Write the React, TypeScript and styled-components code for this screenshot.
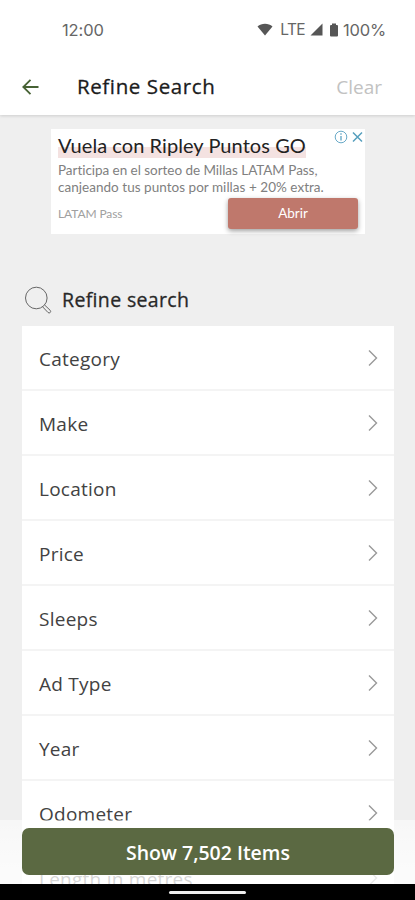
import React from "react";
import styled, { createGlobalStyle } from "styled-components";

const GlobalStyle = createGlobalStyle`
  * { box-sizing: border-box; }
  html, body { margin: 0; padding: 0; overflow: hidden; }
  body { font-family: "Open Sans", sans-serif; background: #efefef; }
`;

const Screen = styled.div`
  position: relative;
  width: 415px;
  height: 900px;
  overflow: hidden;
  background: #efefef;
`;

const Header = styled.header`
  height: 115px;
  background: #fff;
  box-shadow: 0 1px 3px rgba(0, 0, 0, 0.14);
`;

const StatusBar = styled.div`
  height: 58px;
  padding: 1px 29px 0 62px;
  display: flex;
  align-items: center;
  justify-content: space-between;
  color: #666;
  font-family: Inter, sans-serif;
  font-size: 16.5px;
  line-height: 20px;
`;

const Clock = styled.span`
  letter-spacing: -0.1px;
`;

const StatusIcons = styled.div`
  display: flex;
  align-items: center;
  svg { display: block; }
`;

const Network = styled.span`
  margin: 0 5px 0 7px;
  font-size: 15.5px;
  letter-spacing: -0.6px;
`;

const BatteryIcon = styled.svg`
  margin-left: 6px;
`;

const Percent = styled.span`
  margin-left: 4px;
  letter-spacing: -0.2px;
`;

const TitleBar = styled.div`
  height: 57px;
  padding: 0 33px 0 22px;
  display: flex;
  align-items: center;
`;

const Title = styled.h1`
  margin: -2px auto 0 38px;
  font-size: 20.5px;
  line-height: 28px;
  font-weight: 500;
  letter-spacing: 0.6px;
  -webkit-text-stroke: 0.3px #1c1c1c;
  color: #1c1c1c;
`;

const Clear = styled.span`
  font-size: 19px;
  line-height: 28px;
  color: #c2c2c2;
`;

const Ad = styled.section`
  position: relative;
  width: 314px;
  height: 105px;
  margin: 14px 0 0 51px;
  padding: 4px 7px 0;
  background: #fff;
  color: #808080;
  font-family: Lato, sans-serif;
`;

const AdTitle = styled.div`
  width: max-content;
  height: 25px;
  line-height: 25px;
  font-size: 20px;
  letter-spacing: 0.06px;
  color: #222;
  background: linear-gradient(transparent 14px, #f4e2e1 14px);
`;

const AdCopy = styled.div`
  margin-top: 4px;
  font-size: 13.5px;
  line-height: 17px;
  white-space: nowrap;
`;

const AdLine = styled.div<{ $spacing: number }>`
  letter-spacing: ${(p) => p.$spacing}px;
`;

const AdFooter = styled.div`
  display: flex;
  align-items: center;
  justify-content: space-between;
  margin-top: 2px;
  font-size: 12px;
  letter-spacing: -0.1px;
  color: #a0a0a0;
`;

const AdButton = styled.button`
  width: 130px;
  height: 31px;
  border: 0;
  border-radius: 3px;
  padding: 0 0 2px;
  background: #bf786c;
  color: #fff;
  font: 400 13.5px Lato, sans-serif;
  box-shadow: 0 2px 5px rgba(0, 0, 0, 0.38);
`;

const AdMarks = styled.div`
  position: absolute;
  top: 1px;
  right: 1px;
  display: flex;
  gap: 3px;
`;

const Section = styled.section`
  margin: 48px 21px 0 22px;
`;

const SectionTitle = styled.h2`
  display: flex;
  align-items: center;
  height: 44px;
  margin: 0;
  padding: 0 0 8px 2px;
  gap: 10px;
  font-size: 19.5px;
  line-height: 26px;
  font-weight: 500;
  letter-spacing: 0.35px;
  -webkit-text-stroke: 0.3px #282828;
  color: #282828;
`;

const Row = styled.div`
  height: 65px;
  padding: 1px 15px 0 17px;
  display: flex;
  align-items: center;
  justify-content: space-between;
  background: #fff;
  border-bottom: 2px solid #f4f4f4;
  font-size: 19px;
  letter-spacing: 0.25px;
  color: #424242;
`;

const RowLabel = styled.span`
  line-height: 26px;
  padding-top: 2px;
`;

const Footer = styled.div`
  position: absolute;
  left: 0;
  right: 0;
  bottom: 0;
`;

const Action = styled.div`
  height: 64px;
  padding: 8px 21px 0 22px;
  background: linear-gradient(rgba(255, 255, 255, 0.5), rgba(255, 255, 255, 0.78) 55px);
`;

const ShowButton = styled.button`
  width: 100%;
  height: 47px;
  border: 0;
  border-radius: 7px;
  padding: 2px 0 0;
  background: #5b6942;
  color: #fff;
  font: 600 19.5px "Open Sans", sans-serif;
`;

const NavBar = styled.div`
  height: 16px;
  display: flex;
  justify-content: center;
  padding-top: 7px;
  background: #000;
`;

const NavHandle = styled.div`
  width: 77px;
  height: 3px;
  border-radius: 2px;
  background: #eee;
`;

const rows = [
  "Category",
  "Make",
  "Location",
  "Price",
  "Sleeps",
  "Ad Type",
  "Year",
  "Odometer",
  "Length in metres",
];

const Chevron = () => (
  <svg width="12" height="18" viewBox="0 0 12 18" fill="none" stroke="#999" strokeWidth="1.4">
    <path d="M2 1.500 9.500 9 2 16.500" />
  </svg>
);

export default function App() {
  return (
    <Screen>
      <GlobalStyle />
      <Header>
        <StatusBar>
          <Clock>12:00</Clock>
          <StatusIcons>
            <svg width="16" height="13" viewBox="0 0 16 13" fill="#565656">
              <path d="M.5 3.500C4.500-.2 11.500-.2 15.500 3.500L8 12.500Z" />
            </svg>
            <Network>LTE</Network>
            <svg width="13" height="13" viewBox="0 0 13 13" fill="#565656">
              <path d="M12.500.5v12H.5Z" />
            </svg>
            <BatteryIcon width="10" height="14" viewBox="0 0 10 14" fill="#565656">
              <path d="M3 .5h4V2h1q1 0 1 1v9.500q0 1-1 1H2q-1 0-1-1V3q0-1 1-1h1Z" />
            </BatteryIcon>
            <Percent>100%</Percent>
          </StatusIcons>
        </StatusBar>
        <TitleBar>
          <svg width="17" height="16" viewBox="0 0 17 16" fill="none" stroke="#476234" strokeWidth="1.8">
            <path d="M16.500 8H1.300M8.500.8 1.300 8l7.200 7.200" />
          </svg>
          <Title>Refine Search</Title>
          <Clear>Clear</Clear>
        </TitleBar>
      </Header>
      <Ad>
        <AdTitle>Vuela con Ripley Puntos GO</AdTitle>
        <AdCopy>
          <AdLine $spacing={-0.04}>Participa en el sorteo de Millas LATAM Pass,</AdLine>
          <AdLine $spacing={0.03}>canjeando tus puntos por millas + 20% extra.</AdLine>
        </AdCopy>
        <AdFooter>
          <span>LATAM Pass</span>
          <AdButton>Abrir</AdButton>
        </AdFooter>
        <AdMarks>
          <svg width="14" height="14" viewBox="0 0 14 14" fill="none" stroke="#69aac8">
            <circle cx="7" cy="7" r="5.800" />
            <path d="M7 6v4.500M7 3.300v1.400" strokeWidth="1.400" />
          </svg>
          <svg width="13" height="14" viewBox="0 0 13 14" fill="none" stroke="#569fbd" strokeWidth="1.500">
            <path d="m2 2.500 9 9m0-9-9 9" />
          </svg>
        </AdMarks>
      </Ad>
      <Section>
        <SectionTitle>
          <svg width="28" height="28" viewBox="0 0 28 28" fill="none" stroke="#666" strokeWidth="1">
            <circle cx="12.300" cy="12" r="10.800" />
            <path d="m18.500 20.700 5.500 5.800q1.200 1 2.200 0t0-2.200l-5.800-5.500" />
          </svg>
          Refine search
        </SectionTitle>
        {rows.map((label) => (
          <Row key={label}>
            <RowLabel>{label}</RowLabel>
            <Chevron />
          </Row>
        ))}
      </Section>
      <Footer>
        <Action>
          <ShowButton>Show 7,502 Items</ShowButton>
        </Action>
        <NavBar>
          <NavHandle />
        </NavBar>
      </Footer>
    </Screen>
  );
}
